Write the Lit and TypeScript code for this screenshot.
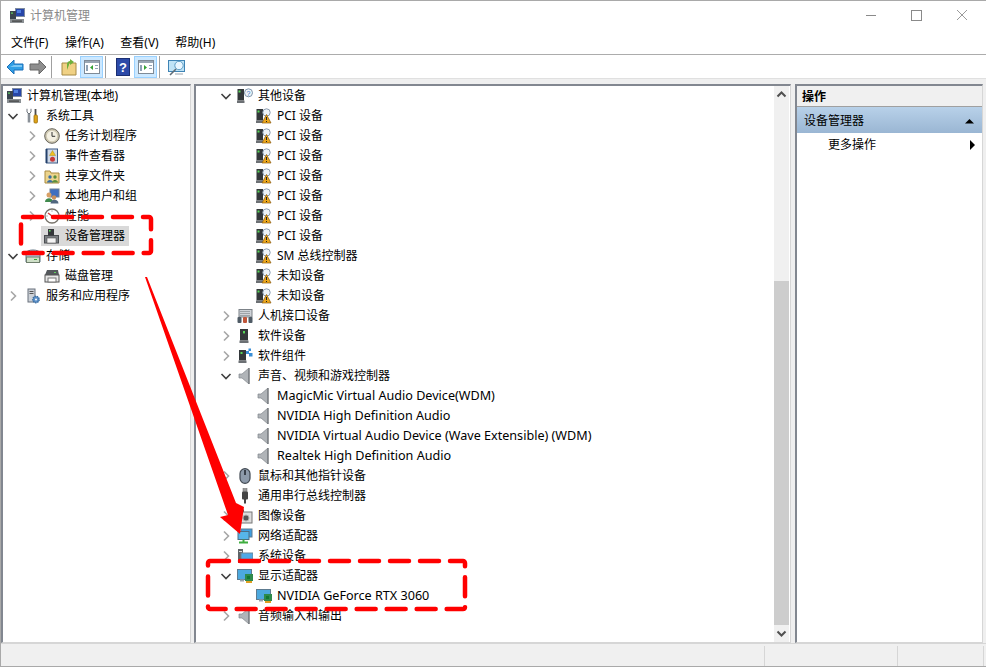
import { LitElement, html, css, svg } from "lit";
import { customElement } from "lit/decorators.js";

const computer = svg`<rect x="6.5" y="0.5" width="9" height="8" fill="#2746a8" stroke="#7f8ca0"/><rect x="8" y="2" width="4" height="3" fill="#4f7fe0"/><rect x="1" y="3" width="6" height="8" fill="#3a444f"/><rect x="2" y="4.5" width="2" height="1.2" fill="#5fd35f"/><rect x="1" y="11" width="14" height="4" fill="#8b9094"/><rect x="3" y="12.5" width="10" height="1.2" fill="#3f3f3f"/>`;
const tools = svg`<path d="M4 5v9.5" stroke="#8a9198" stroke-width="2.6" fill="none"/><path d="M2 .8v3.2l2 2 2-2V.8" stroke="#6e757c" fill="#fff"/><path d="M10.5 1v6" stroke="#4c4c4c" stroke-width="1.8"/><rect x="9" y="7" width="3.4" height="8" rx="1" fill="#e0a419" stroke="#9a6d08" stroke-width=".8"/>`;
const clock = svg`<circle cx="8" cy="8" r="7.3" fill="#cfc9b2" stroke="#66635a" stroke-width="1"/><circle cx="8" cy="8" r="5.2" fill="#f4f0e2"/><path d="M8 4v4.3h3.2" stroke="#333" fill="none"/>`;
const log = svg`<rect x="2.5" y="1" width="11" height="14" fill="#cfd8e6" stroke="#3c5a85"/><path d="M2.5 1v14" stroke="#23406b" stroke-width="2"/><path d="M8.5 2.5l3 5h-6z" fill="#f0c020" stroke="#9a7a10" stroke-width=".4"/><circle cx="8.5" cy="11.3" r="2.5" fill="#c83a3a"/>`;
const share = svg`<path d="M1 3h5l1 2h8v10H1z" fill="#ecd48c" stroke="#a98a3e"/><circle cx="6" cy="9" r="1.7" fill="#3a6ea5"/><path d="M3 14.5c0-3.4 6-3.4 6 0" fill="#3a6ea5"/><circle cx="11" cy="9" r="1.7" fill="#5a8f3c"/><path d="M8 14.5c0-3.4 6-3.4 6 0" fill="#5a8f3c"/>`;
const users = svg`<rect x="6" y="1" width="9" height="8" fill="#3f6fc0" stroke="#6e7f95"/><circle cx="5" cy="7" r="2.5" fill="#d9a066"/><path d="M1 14c0-5 8-5 8 0z" fill="#3f8a4d"/><circle cx="10" cy="9.5" r="2.2" fill="#c98f5a"/><path d="M6.5 15.5c0-5 8-5 8 0z" fill="#51677f"/>`;
const perf = svg`<circle cx="8" cy="8" r="7" fill="#fff" stroke="#77736a" stroke-width="1.3"/><path d="M8 8L4 5" stroke="#c83a3a" stroke-width="1.4"/><path d="M2.5 8h1M8 2.5v1M13.5 8h-1" stroke="#777"/>`;
const dev = svg`<rect x="0.5" y="7.5" width="14" height="7.5" fill="#7a7e82" stroke="#4a4d50"/><rect x="3" y="10" width="9" height="5" fill="#f4f4f4" stroke="#555" stroke-width=".6"/><rect x="4" y="1" width="6" height="6.5" fill="#34373a"/><rect x="5" y="2" width="1.6" height="1.6" fill="#5fd35f"/>`;
const storage = svg`<path d="M1 5a7 3 0 0 1 14 0v9H1z" fill="#a8c8dc" stroke="#5d7484"/><rect x="1.5" y="9" width="13" height="5.5" fill="#cfe0c8" stroke="#6f7f6d"/><rect x="9" y="11" width="3" height="1" fill="#3a3"/>`;
const disk = svg`<path d="M3 2h11l1 5H1z" fill="#54585c"/><rect x="1" y="7" width="14" height="7" fill="#e7e7e7" stroke="#555"/><rect x="4" y="10" width="8" height="4" fill="#fff" stroke="#777"/><rect x="10" y="4" width="2" height="1" fill="#5fd35f"/>`;
const svc = svg`<rect x="3" y="1" width="7" height="13" fill="#cdd2d8" stroke="#68717c"/><path d="M4.5 3.5h4M4.5 5.5h4" stroke="#555"/><circle cx="11" cy="11.5" r="3.2" fill="#5b8fc7" stroke="#3a6da0" stroke-width="1.4" stroke-dasharray="1.4 .8"/><circle cx="11" cy="11.5" r="1" fill="#fff"/>`;
const tower = svg`<rect x="3" y="1" width="8" height="11.5" fill="#33373a"/><rect x="6" y="3" width="2" height="2.4" fill="#56d656"/><path d="M2.5 12.5h9V15h-9z" fill="#6c7074"/>`;
const miniTower = svg`<rect x="0.5" y="1" width="6.5" height="11.5" fill="#33373a"/><rect x="1.5" y="2.5" width="2" height="2" fill="#56d656"/><path d="M0 12.5h7.5V15H0z" fill="#6c7074"/>`;
const other = svg`${miniTower}<circle cx="11.5" cy="4.8" r="4" fill="#eef3f8" stroke="#7e94aa"/><text x="11.5" y="7.5" font-size="7" text-anchor="middle" fill="#2a6fc0" font-family="Liberation Sans">?</text>`;
const warn = svg`${miniTower}<circle cx="10.5" cy="4.5" r="3.7" fill="#eef3f8" stroke="#8a9cb0"/><path d="M10.5 6.5l4.5 8.5H6z" fill="#eda81c" stroke="#8a5a10" stroke-width=".7"/><path d="M10.5 9v3M10.5 13v1" stroke="#222"/>`;
const kbd = svg`<rect x="2" y="1.5" width="13" height="7.5" fill="#cfd3d8" stroke="#7c8288"/><path d="M3.5 3.5h10M3.5 5.5h10M3.5 7.5h10" stroke="#6d7278" stroke-dasharray="1 1"/><rect x="0.5" y="9" width="4" height="6" rx="1" fill="#4f5a65"/><rect x="6" y="9" width="4" height="6" rx="1" fill="#c0563a"/><rect x="11.5" y="9" width="4" height="6" rx="1" fill="#4f5a65"/>`;
const chip = svg`<rect x="2" y="2" width="7" height="10.5" fill="#33373a"/><rect x="3.5" y="4" width="2" height="2" fill="#56d656"/><path d="M1.5 12.5h8V15h-8z" fill="#6c7074"/><rect x="9" y="3" width="3" height="3" fill="#3a8fd8"/><rect x="12" y="5" width="3.5" height="3.5" fill="#3a8fd8"/><rect x="11.5" y="0.5" width="2.5" height="2.5" fill="#3a8fd8"/>`;
const speaker = svg`<path d="M2 6h3l7-6v16l-7-6H2z" fill="#b0b4b8" stroke="#83878c" stroke-width=".7"/><path d="M12 0v16" stroke="#63676b"/>`;
const mouse = svg`<rect x="3" y="0.7" width="10" height="14.6" rx="5" fill="#8d9aaa" stroke="#3f4750" stroke-width="1.2"/><path d="M8 2v5" stroke="#39404a" stroke-width="2"/>`;
const usb = svg`<rect x="6" y="0.5" width="4" height="3" fill="#999" stroke="#666" stroke-width=".5"/><rect x="5" y="3.5" width="6" height="8" rx="1" fill="#444"/><path d="M8 11v4.5" stroke="#444" stroke-width="2"/>`;
const camera = svg`<path d="M4 4l3-3v3z" fill="#555"/><rect x="2" y="4" width="13" height="11" fill="#dcdcdc" stroke="#777"/><circle cx="9" cy="10" r="3" fill="#555" stroke="#aaa"/>`;
const net = svg`<rect x="4" y="1" width="11" height="8" fill="#3f9ee0" stroke="#5f7a8f"/><rect x="1" y="3.5" width="11" height="8" fill="#56b5ea" stroke="#4d6e85"/><path d="M6.5 11.5v2M2 14.5h9" stroke="#3fae3f" stroke-width="2"/>`;
const sys = svg`<rect x="1" y="1" width="5" height="14" fill="#5f6468"/><rect x="2" y="3" width="3" height="1" fill="#ddd"/><rect x="4" y="5" width="12" height="9" fill="#4fa9e6" stroke="#6f8799"/>`;
const gpu = svg`<rect x="0.5" y="1.5" width="14" height="10" fill="#4ca9df" stroke="#5d7b90"/><rect x="8" y="6" width="8" height="7" fill="#2e8a4c"/><rect x="10" y="8" width="3" height="3" fill="#173"/><rect x="9" y="13" width="6" height="2" fill="#e0a020"/><rect x="3" y="11.5" width="4" height="2" fill="#9aa4ad"/>`;

type Row = { t: string; i: unknown; c?: "o" | "c"; d: number; sel?: boolean };

const left: Row[] = [
  { t: "计算机管理(本地)", i: computer, d: 0 },
  { t: "系统工具", i: tools, c: "o", d: 1 },
  { t: "任务计划程序", i: clock, c: "c", d: 2 },
  { t: "事件查看器", i: log, c: "c", d: 2 },
  { t: "共享文件夹", i: share, c: "c", d: 2 },
  { t: "本地用户和组", i: users, c: "c", d: 2 },
  { t: "性能", i: perf, c: "c", d: 2 },
  { t: "设备管理器", i: dev, d: 2, sel: true },
  { t: "存储", i: storage, c: "o", d: 1 },
  { t: "磁盘管理", i: disk, d: 2 },
  { t: "服务和应用程序", i: svc, c: "c", d: 1 },
];
const pci = Array.from({ length: 7 }, () => ({ t: "PCI 设备", i: warn, d: 2 }));
const center: Row[] = [
  { t: "其他设备", i: other, c: "o", d: 1 },
  ...pci,
  { t: "SM 总线控制器", i: warn, d: 2 },
  { t: "未知设备", i: warn, d: 2 },
  { t: "未知设备", i: warn, d: 2 },
  { t: "人机接口设备", i: kbd, c: "c", d: 1 },
  { t: "软件设备", i: tower, c: "c", d: 1 },
  { t: "软件组件", i: chip, c: "c", d: 1 },
  { t: "声音、视频和游戏控制器", i: speaker, c: "o", d: 1 },
  { t: "MagicMic Virtual Audio Device(WDM)", i: speaker, d: 2 },
  { t: "NVIDIA High Definition Audio", i: speaker, d: 2 },
  { t: "NVIDIA Virtual Audio Device (Wave Extensible) (WDM)", i: speaker, d: 2 },
  { t: "Realtek High Definition Audio", i: speaker, d: 2 },
  { t: "鼠标和其他指针设备", i: mouse, c: "c", d: 1 },
  { t: "通用串行总线控制器", i: usb, c: "c", d: 1 },
  { t: "图像设备", i: camera, c: "c", d: 1 },
  { t: "网络适配器", i: net, c: "c", d: 1 },
  { t: "系统设备", i: sys, c: "c", d: 1 },
  { t: "显示适配器", i: gpu, c: "o", d: 1 },
  { t: "NVIDIA GeForce RTX 3060", i: gpu, d: 2 },
  { t: "音频输入和输出", i: speaker, c: "c", d: 1 },
];

@customElement("app-root")
export class AppRoot extends LitElement {
  static styles = css`
    :host { display: block; width: 986px; height: 667px; position: relative; overflow: hidden; background: #fff;
      font: 12px/20px "Noto Sans", "Noto Sans CJK SC", sans-serif; color: #000; }
    .win { height: 667px; box-sizing: border-box; border: 1px solid #a9a9a9; border-right: 0; display: flex; flex-direction: column; }
    .title { height: 30px; display: flex; align-items: center; padding-left: 8px; gap: 5px; color: #8a8a8a; flex: none; }
    .title svg { width: 16px; height: 16px; }
    .title .name { flex: 1; }
    .caps { display: flex; align-items: center; }
    .caps svg { display: block; width: 46px; height: 14px; }
    .menu { height: 22px; padding-top: 1px; display: flex; align-items: center; padding-left: 10px; gap: 16.5px; border-bottom: 1px solid #acacac; flex: none; }
    .tools { height: 22px; padding-top: 1px; display: flex; align-items: flex-start; padding-left: 2px; flex: none; background: #fff; border-bottom: 1px solid #e0e0e0; }
    .tools svg { width: 20px; height: 20px; display: block; }
    .tb { width: 23px; height: 22px; display: flex; align-items: center; justify-content: center; box-sizing: border-box; flex: none; }
    .tb.on { background: #cce8ff; border: 1px solid #99d1ff; }
    .sep { width: 1px; height: 22px; background: #a0a0a0; margin: 0 5px 0 2px; flex: none; }
    .main { flex: 1; min-height: 0; background: #efefef; display: grid; grid-template-columns: 190px 597px 189px; gap: 0 3px; padding: 5px 2px 0 0; }
    .pane { background: #fff; border-top: 2px solid #828790; border-left: 2px solid #828790; border-bottom: 1px solid #d6d6d6; border-right: 1px solid #d6d6d6; box-sizing: border-box; min-height: 0; overflow: hidden; position: relative; }
    .row { height: 20px; display: flex; align-items: center; white-space: nowrap; }
    .ch { width: 12px; height: 12px; flex: none; margin-right: 6px; }
    .ctr .ch { margin-left: 1px; margin-right: 5px; }
    .ic { width: 16px; height: 16px; flex: none; display: block; }
    .lbl { margin-left: 5px; }
    .lbl.lat { font-size: 12.6px; }
    .row.sel .lbl { background: #d9d9d9; margin-left: 0; padding: 0 4px 0 5px; }
    .row.sel .ic { background: #d9d9d9; padding: 2px 0 2px 3px; margin-left: -3px; box-sizing: content-box; }
    .ctr { display: flex; }
    .list { flex: 1; min-width: 0; }
    .sb { width: 15px; margin-right: 1px; flex: none; background: #f0f0f0; display: flex; flex-direction: column; align-items: center; }
    .sb svg { width: 15px; height: 17px; display: block; flex: none; }
    .sb .gap { height: 178px; flex: none; }
    .sb .thumb { flex: 1; align-self: stretch; background: #cdcdcd; }
    .acts { display: flex; flex-direction: column; margin-left: 1px; }
    .ah { height: 20px; background: #f0f0f0; font-weight: 700; padding-left: 5px; border-bottom: 1px solid #a0a0a0; line-height: 22px; flex: none; }
    .ag { height: 25px; padding-top: 1px; background: linear-gradient(#b8d1e9, #9ab6d3); display: flex; align-items: center; padding-left: 7px; flex: none; }
    .ag span, .am span { flex: 1; }
    .ag svg { width: 14px; height: 10px; margin-right: 5px; display: block; }
    .am svg { width: 14px; height: 10px; margin-right: 3px; display: block; }
    .am { height: 23px; display: flex; align-items: center; padding-left: 31px; flex: none; }
    .status { height: 22px; background: #f0f0f0; border-top: 1px solid #d6d6d6; display: flex; flex: none; justify-content: flex-end; }
    .status i { display: block; border-left: 1px solid #d6d6d6; margin-top: 2px; box-sizing: border-box; }
    .s1 { width: 133px; } .s2 { width: 86px; } .s3 { width: 3px; }
    .over { position: absolute; left: 0; top: 0; width: 986px; height: 667px; pointer-events: none; }
  `;

  private row(r: Row, base: number) {
    const pad = r.d === 0 ? 3 : base + (r.d - 1) * 19;
    const chev =
      r.c === "o"
        ? svg`<path d="M1.5 4l4.5 4.5L10.5 4" fill="none" stroke="#404040" stroke-width="1.6"/>`
        : r.c === "c"
          ? svg`<path d="M4 1.5L8.5 6 4 10.5" fill="none" stroke="#a6a6a6" stroke-width="1.6"/>`
          : null;
    const ascii = /^[\x00-\x7f]+$/.test(r.t);
    return html`<div class="row ${r.sel ? "sel" : ""}" style="padding-left:${pad}px">
      ${r.d === 0 ? null : html`<svg class="ch" viewBox="0 0 12 12">${chev}</svg>`}
      <svg class="ic" viewBox="0 0 16 16">${r.i}</svg>
      <span class="lbl ${ascii ? "lat" : ""}">${r.t}</span>
    </div>`;
  }

  render() {
    return html`<div class="win">
        <div class="title">
          <svg viewBox="0 0 16 16">${computer}</svg><span class="name">计算机管理</span>
          <div class="caps">
            <svg viewBox="0 0 46 14"><path d="M18 6.5h10" stroke="#8a8a8a"/></svg>
            <svg viewBox="0 0 46 14"><rect x="17.5" y="1.5" width="10" height="10" fill="none" stroke="#8a8a8a"/></svg>
            <svg viewBox="0 0 46 14"><path d="M17 1l10 10M27 1L17 11" stroke="#9a9a9a"/></svg>
          </div>
        </div>
        <div class="menu"><span>文件(F)</span><span>操作(A)</span><span>查看(V)</span><span>帮助(H)</span></div>
        <div class="tools">
          <span class="tb"><svg viewBox="0 0 20 20"><path d="M2 10l7-7v4h9v6H9v4z" fill="#2f9fe6" stroke="#1c6fb8"/><path d="M9 8h8v2H5z" fill="#7cc8f5"/></svg></span>
          <span class="tb"><svg viewBox="0 0 20 20"><path d="M18 10l-7-7v4H2v6h9v4z" fill="#8e8e8e" stroke="#666"/></svg></span>
          <span class="sep"></span>
          <span class="tb"><svg viewBox="0 0 20 20"><path d="M3 6h14v12H3z" fill="#f0d184" stroke="#a68a45"/><path d="M8 13V7c0-2 2-3 3-3V2l4 3-4 3V6c-1 0-1 1-1 2z" fill="#6eb03c"/></svg></span>
          <span class="tb on"><svg viewBox="0 0 20 20"><rect x="2.5" y="3.5" width="15" height="13" fill="#fff" stroke="#7e8a96"/><rect x="3" y="4" width="14" height="2" fill="#9aa7b4"/><path d="M11 8v5l-3-2.5z" fill="#35a235"/><path d="M13 8h3v1h-3zM13 11h3v1h-3zM4 8h2v6H4z" fill="#8fa2b5"/></svg></span>
          <span class="sep"></span>
          <span class="tb"><svg viewBox="0 0 20 20"><rect x="3.5" y="1.5" width="13" height="17" fill="#2c4aa8" stroke="#1b2f73"/><text x="10" y="15" font-size="13" font-weight="700" text-anchor="middle" fill="#fff" font-family="Liberation Sans">?</text></svg></span>
          <span class="tb on"><svg viewBox="0 0 20 20"><rect x="2.5" y="3.5" width="15" height="13" fill="#fff" stroke="#7e8a96"/><rect x="3" y="4" width="14" height="2" fill="#9aa7b4"/><path d="M8 8v5l3-2.5z" fill="#35a235"/><path d="M13 8h3v1h-3zM13 11h3v1h-3zM4 8h2v6H4z" fill="#8fa2b5"/></svg></span>
          <span class="sep"></span>
          <span class="tb"><svg viewBox="0 0 20 20"><rect x="1.5" y="3.5" width="16" height="11" fill="#bfe3f6" stroke="#3f84b5"/><circle cx="12" cy="8.5" r="4.2" fill="#e8f6ff" stroke="#5d9dc5"/><path d="M9 12l-6 6" stroke="#5e6b75" stroke-width="1.6"/><path d="M8 17h8" stroke="#9aa4ad"/></svg></span>
        </div>
        <div class="main">
          <div class="pane">${left.map((r) => this.row(r, 4))}</div>
          <div class="pane ctr">
            <div class="list">${center.map((r) => this.row(r, 23))}</div>
            <div class="sb">
              <svg viewBox="0 0 15 17"><path d="M3.5 10.5l4-4 4 4" fill="none" stroke="#505050" stroke-width="2"/></svg>
              <div class="gap"></div><div class="thumb"></div>
              <svg viewBox="0 0 15 17"><path d="M3.5 6.5l4 4 4-4" fill="none" stroke="#505050" stroke-width="2"/></svg>
            </div>
          </div>
          <div class="pane acts">
            <div class="ah">操作</div>
            <div class="ag"><span>设备管理器</span><svg viewBox="0 0 14 10"><path d="M2 7.5l4.5-4.5 4.5 4.5z" fill="#000"/></svg></div>
            <div class="am"><span>更多操作</span><svg viewBox="0 0 14 10"><path d="M5 0l5 5-5 5z" fill="#000"/></svg></div>
          </div>
        </div>
        <div class="status"><i class="s1"></i><i class="s2"></i><i class="s3"></i></div>
      </div>
      <svg class="over" viewBox="0 0 986 667">
        <g fill="none" stroke="#ff0000" stroke-width="4.5" stroke-linecap="round" stroke-dasharray="19 11">
          <rect x="21" y="217" width="130" height="36" rx="2"/>
          <rect x="208" y="561" width="257" height="48" rx="2"/>
        </g>
        <path d="M145 277L147 277L236 503L244 507L240 534L220 517L228 515Z" fill="#ff0000"/>
      </svg>`;
  }
}
